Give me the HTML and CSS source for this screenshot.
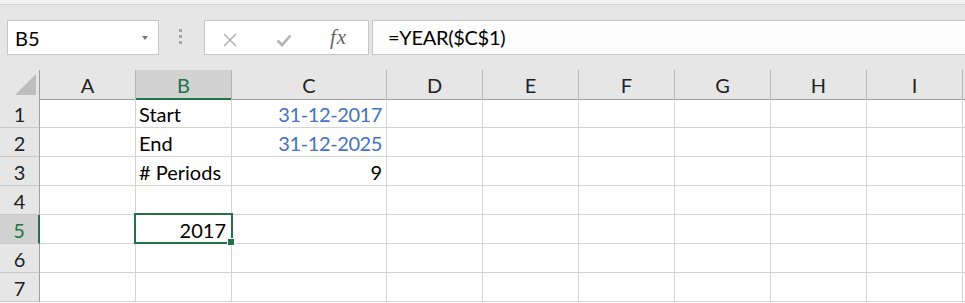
FILE: index.html
```html
<!DOCTYPE html>
<html>
<head>
   <meta charset="UTF-8">
   <title>Sheet</title>
   <link rel="stylesheet" href="styles.css">
</head>
<body>
   <div class="titlebar"></div>
   <div class="toolbar">
      <div class="namebox">
         <span>B5</span>
         <svg class="arrow" width="6" height="4" viewBox="0 0 6 4"><path d="M0 0H6L3 4Z" fill="#777"/></svg>
      </div>
      <div class="grip"><i></i><i></i><i></i></div>
      <div class="fbtns">
         <svg class="ico-x" width="14" height="14" viewBox="0 0 14 14"><path d="M1 1L13 13M13 1L1 13" stroke="#b3b3b3" stroke-width="1.6" fill="none"/></svg>
         <svg class="ico-ok" width="16" height="13" viewBox="0 0 16 13"><path d="M1.5 6.5L6 11L14.5 1.5" stroke="#b3b3b3" stroke-width="2.6" fill="none"/></svg>
         <span class="fx">fx</span>
      </div>
      <div class="formula">=YEAR($C$1)</div>
   </div>

   <div class="sheet">
      <div class="row hdr">
         <div class="corner"><svg width="21" height="21" viewBox="0 0 21 21"><path d="M21 0V21H0Z" fill="#bdbdbd"/></svg></div>
         <div>A</div><div class="sel">B</div><div>C</div><div>D</div><div>E</div><div>F</div><div>G</div><div>H</div><div>I</div><div></div>
      </div>
      <div class="row">
         <div class="num">1</div>
         <div></div><div>Start</div><div class="r date">31-12-2017</div><div></div><div></div><div></div><div></div><div></div><div></div><div></div>
      </div>
      <div class="row">
         <div class="num">2</div>
         <div></div><div>End</div><div class="r date">31-12-2025</div><div></div><div></div><div></div><div></div><div></div><div></div><div></div>
      </div>
      <div class="row">
         <div class="num">3</div>
         <div></div><div># Periods</div><div class="r">9</div><div></div><div></div><div></div><div></div><div></div><div></div><div></div>
      </div>
      <div class="row">
         <div class="num">4</div>
         <div></div><div></div><div></div><div></div><div></div><div></div><div></div><div></div><div></div><div></div>
      </div>
      <div class="row">
         <div class="num sel">5</div>
         <div></div><div class="r active">2017</div><div></div><div></div><div></div><div></div><div></div><div></div><div></div><div></div>
      </div>
      <div class="row">
         <div class="num">6</div>
         <div></div><div></div><div></div><div></div><div></div><div></div><div></div><div></div><div></div><div></div>
      </div>
      <div class="row">
         <div class="num">7</div>
         <div></div><div></div><div></div><div></div><div></div><div></div><div></div><div></div><div></div><div></div>
      </div>
   </div>
</body>
</html>
```

FILE: styles.css
```css
body {
   margin: 0;
   width: 965px;
   height: 303px;
   overflow: hidden;
   background-color: #fff;
   font-family: Lato, "Open Sans", sans-serif;
   font-size: 20px;
   color: #000;
}
.titlebar {
   height: 4px;
   background-color: #f3f3f3;
   border-bottom: 1px solid #d5d5d5;
}
.toolbar {
   display: flex;
   align-items: flex-start;
   height: 65px;
   box-sizing: border-box;
   padding: 15px 0 0 7px;
   background-color: #e6e6e6;
}
.namebox {
   width: 152px;
   height: 35px;
   box-sizing: border-box;
   border: 1px solid #c6c6c6;
   background-color: #fff;
   display: flex;
   align-items: center;
   justify-content: space-between;
   padding: 0 10px 0 7px;
}
.namebox .arrow {
   margin-top: 1px;
}
.grip {
   margin-left: 20px;
   padding-top: 9px;
   display: flex;
   flex-direction: column;
   gap: 3px;
}
.grip i {
   display: block;
   width: 3px;
   height: 3px;
   background-color: #a6a6a6;
}
.fbtns {
   margin-left: 22px;
   width: 165px;
   height: 35px;
   box-sizing: border-box;
   border: 1px solid #c6c6c6;
   background-color: #fff;
   display: flex;
   align-items: center;
   padding-left: 18px;
}
.ico-x {
   margin-top: 4px;
}
.ico-ok {
   margin-left: 39px;
   margin-top: 5px;
}
.fx {
   margin-left: 38px;
   font-family: "Liberation Serif", serif;
   font-style: italic;
   font-size: 21px;
   color: #666;
   letter-spacing: 1px;
}
.formula {
   flex: 1;
   margin-left: 3px;
   height: 35px;
   box-sizing: border-box;
   border: 1px solid #c6c6c6;
   border-right: none;
   background-color: #fdfdfd;
   padding-left: 15px;
   line-height: 33px;
   letter-spacing: -0.3px;
}

/* grid */
.row {
   display: grid;
   grid-template-columns: 40px 96px 96px 155px repeat(6, 96px) 1fr;
   height: 29px;
}
.row > div {
   box-sizing: border-box;
   border-right: 1px solid #d4d4d4;
   border-bottom: 1px solid #d4d4d4;
   padding: 2px 3px 0 3px;
   line-height: 26px;
   white-space: nowrap;
}
.row > div.r {
   text-align: right;
   padding-right: 4px;
}
.date {
   color: #4472c4;
   letter-spacing: -0.4px;
}
.hdr > div {
   background-color: #e6e6e6;
   border-right-color: #b4b4b4;
   border-bottom-color: #9e9e9e;
   text-align: center;
   color: #222;
}
.hdr > div:last-child {
   border-right: none;
}
.hdr > div.sel {
   background-color: #d2d2d2;
   border-bottom: 2px solid #217346;
   color: #217346;
}
.hdr .corner {
   border-right-color: #9e9e9e;
   padding: 4px 0 0 15px;
   line-height: 0;
   text-align: left;
}
.row > div.num {
   background-color: #e6e6e6;
   border-right-color: #9e9e9e;
   border-bottom-color: #c8c8c8;
   text-align: center;
   color: #222;
}
.row > div.num.sel {
   background-color: #d2d2d2;
   border-right: 2px solid #217346;
   color: #217346;
}
.row > div.active {
   position: relative;
   z-index: 2;
   padding-right: 5px;
}
.active::after {
   content: "";
   position: absolute;
   top: -2px;
   left: -2px;
   right: -2px;
   bottom: -1px;
   border: 2px solid #217346;
}
.active::before {
   content: "";
   position: absolute;
   right: -4px;
   bottom: -3px;
   width: 6px;
   height: 6px;
   background-color: #217346;
   border: 1px solid #fff;
   z-index: 1;
}
```
